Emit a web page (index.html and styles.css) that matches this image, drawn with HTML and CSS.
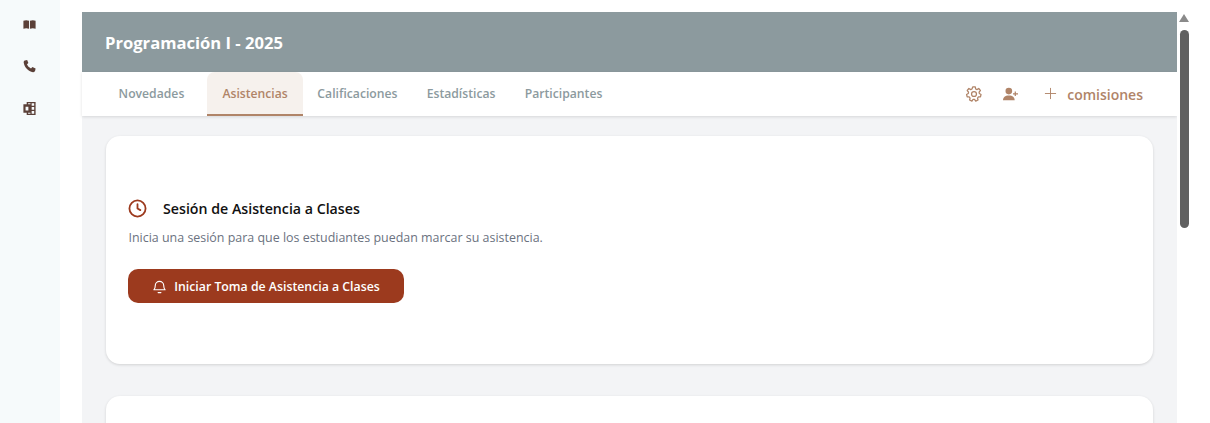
FILE: index.html
```html
<!DOCTYPE html>
<html lang="es">
<head>
  <meta charset="UTF-8">
  <meta name="viewport" content="width=device-width, initial-scale=1.0">
  <title>Programación I - 2025</title>
  <link rel="stylesheet" href="styles.css">
</head>
<body>

  <!-- Sidebar -->
  <aside class="sidebar">
    <svg class="side-icon" viewBox="0 0 16 16"><path d="M1.500 4c2-.8 4-.8 6 0v8.500c-2-.8-4-.8-6 0zM8.500 4c2-.8 4-.8 6 0v8.500c-2-.8-4-.8-6 0z"/></svg>
    <svg class="side-icon" viewBox="0 0 16 16"><path d="M3 1.500 5.500 1l1.300 3.300-1.500 1.400c.8 2 2.200 3.400 4.300 4.400l1.500-1.500 3.400 1.500-.5 2.500c-.3 1-1.300 1.600-2.300 1.400C6.500 13.200 2.600 9 1.800 3.800 1.700 2.700 2.100 1.800 3 1.500z"/></svg>
    <svg class="side-icon" viewBox="0 0 16 16"><path fill-rule="evenodd" d="M5 1h9.500v14H5v-2.500H1.500v-9H5zM6.500 2.500V3.500H9V2.500zM10.300 2.500V5H13V2.500zM10.300 6.300v3H13v-3zM10.300 10.600v3H13v-3zM6.500 12.500v1.100H9v-1.100zM3.800 6v4.200h3V6z"/></svg>
  </aside>

  <main class="main">
    <header class="banner">
      <h1>Programación I - 2025</h1>
    </header>

    <nav class="tabs">
      <a class="tab">Novedades</a>
      <a class="tab active">Asistencias</a>
      <a class="tab">Calificaciones</a>
      <a class="tab">Estadísticas</a>
      <a class="tab">Participantes</a>

      <div class="tab-actions">
        <svg class="gear" viewBox="0 0 24 24" fill="none" stroke="currentColor" stroke-width="1.700" stroke-linejoin="round"><path d="M10.300 2.600h3.400l.5 2.700 1.700.8 2.400-1.400 2.200 2.600-1.700 2.100.3 1.900 2.300 1.300-.8 3.200-2.700.1-1.200 1.500.7 2.600-3.100 1.400-1.600-2.200h-1.900l-1.600 2.200-3.100-1.400.7-2.600-1.200-1.500-2.700-.1-.8-3.200 2.300-1.300.3-1.900-1.700-2.100 2.200-2.600 2.400 1.400 1.700-.8z"/><circle cx="12" cy="12" r="3.300"/></svg>
        <svg class="user-plus" viewBox="0 0 18 16"><circle cx="7" cy="4.500" r="4"/><path d="M0 15.500c0-3.800 2.500-5.800 7-5.800s7 2 7 5.800z"/><path d="M14 5h1.500v2H18v1.500h-2.500v2H14v-2h-2V7h2z"/></svg>
        <button class="add-btn">
          <svg class="plus" viewBox="0 0 14 14" fill="none" stroke="currentColor" stroke-width="1"><path d="M7 1v12M1 7h12"/></svg>
          comisiones
        </button>
      </div>
    </nav>

    <div class="content">
      <section class="card">
        <div class="card-title">
          <svg class="clock" viewBox="0 0 20 20" fill="none" stroke="currentColor" stroke-width="1.900" stroke-linecap="round" stroke-linejoin="round"><circle cx="10" cy="10" r="8.500"/><path d="M10 5.500V10l3 1.700"/></svg>
          <h2>Sesión de Asistencia a Clases</h2>
        </div>
        <p class="card-text">Inicia una sesión para que los estudiantes puedan marcar su asistencia.</p>
        <button class="start-btn">
          <svg class="bell" viewBox="0 0 16 16" fill="none" stroke="currentColor" stroke-width="1.200" stroke-linecap="round" stroke-linejoin="round"><path d="M2 11.500c1-1 1.500-2 1.500-4.500a4.500 4.500 0 0 1 9 0c0 2.500.5 3.500 1.500 4.500z"/><path d="M6.500 14.500h3"/></svg>
          Iniciar Toma de Asistencia a Clases
        </button>
      </section>

      <section class="card card-next"></section>
    </div>
  </main>

  <!-- Scrollbar -->
  <div class="scroll-rail">
    <div class="scroll-arrow"></div>
    <div class="scroll-thumb"></div>
  </div>

</body>
</html>
```

FILE: styles.css
```css
* {
  box-sizing: border-box;
}

html, body {
  height: 100%;
  overflow: hidden;
}

body {
  margin: 0;
  display: flex;
  background-color: #fff;
  font-family: "Open Sans", "Noto Sans", Arial, sans-serif;
}

.sidebar {
  flex: 0 0 60px;
  display: flex;
  flex-direction: column;
  align-items: center;
  gap: 27px;
  padding: 17px 2px 0 0;
  background-color: #f6fafb;
}

.side-icon {
  width: 15px;
  height: 15px;
  fill: #5b4038;
}

.main {
  flex: 0 0 1117px;
  height: 100%;
  overflow: hidden;
  padding: 12px 0 0 22px;
  display: flex;
  flex-direction: column;
}

.banner {
  flex: 0 0 60px;
  padding-left: 23px;
  display: flex;
  align-items: center;
  background-color: #8c9a9e;
}

.banner h1 {
  margin: 0;
  color: white;
  font-size: 16.600px;
  font-weight: 700;
}

.tabs {
  flex: 0 0 44px;
  height: 44px;
  padding-left: 22px;
  display: flex;
  background-color: white;
  box-shadow: 0 1px 3px rgba(0, 0, 0, 0.12);
  position: relative;
}

.tab {
  height: 44px;
  padding: 0 14.600px;
  line-height: 44px;
  font-size: 12.200px;
  font-weight: 600;
  color: #8c9a9e;
}

.tab:first-child {
  margin-right: 8.500px;
}

.tab.active {
  padding: 0 15px;
  color: #b08468;
  background-color: #f6f1ed;
  border-bottom: 2px solid #b08468;
  border-radius: 8px 8px 0 0;
}

.tab-actions {
  margin-left: auto;
  padding-right: 34px;
  padding-top: 1px;
  display: flex;
  align-items: center;
  color: #b08468;
}

.gear {
  width: 18px;
  height: 18px;
  margin-top: -2px;
}

.user-plus {
  width: 15px;
  height: 14px;
  margin-left: 20px;
  margin-top: -2px;
  fill: currentColor;
}

.add-btn {
  margin-left: 26px;
  padding: 0;
  display: flex;
  align-items: center;
  gap: 10px;
  border: none;
  background: none;
  color: #b08468;
  font-family: inherit;
  font-size: 14px;
  font-weight: 600;
  cursor: pointer;
}

.plus {
  width: 13px;
  height: 13px;
  margin-top: -2px;
}

.content {
  flex: 1;
  padding: 20px 24px 0;
  background-color: #f3f4f6;
}

.card {
  height: 228px;
  padding: 63px 22px 0;
  background-color: white;
  border-radius: 14px;
  box-shadow: 0 1px 3px rgba(0, 0, 0, 0.14);
}

.card-next {
  margin-top: 32px;
}

.card-title {
  display: flex;
  align-items: center;
  gap: 16px;
}

.clock {
  width: 19px;
  height: 19px;
  color: #9c3a1e;
}

.card-title h2 {
  margin: 0;
  font-size: 14.200px;
  font-weight: 600;
  color: #111;
}

.card-text {
  margin: 11px 0 0 0.500px;
  font-size: 12.450px;
  color: #6b7280;
}

.start-btn {
  margin-top: 23px;
  width: 276px;
  height: 34px;
  display: flex;
  align-items: center;
  justify-content: center;
  gap: 7px;
  border: none;
  border-radius: 10px;
  background-color: #9c3a1e;
  color: white;
  font-family: inherit;
  font-size: 12.300px;
  font-weight: 600;
  cursor: pointer;
}

.bell {
  width: 15px;
  height: 15px;
}

.scroll-rail {
  flex: 0 0 33px;
  padding: 14px 0 0 2px;
  display: flex;
  flex-direction: column;
  gap: 8px;
}

.scroll-arrow {
  width: 0;
  height: 0;
  border-left: 5px solid transparent;
  border-right: 5px solid transparent;
  border-bottom: 8px solid #8a8a8a;
}

.scroll-thumb {
  width: 9px;
  height: 198px;
  margin-left: 0.500px;
  border-radius: 5px;
  background-color: #606060;
}
```
